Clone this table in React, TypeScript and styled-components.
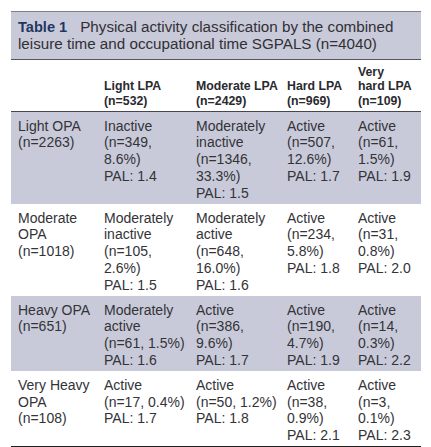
import React from "react";
import styled, { createGlobalStyle } from "styled-components";

const Global = createGlobalStyle`
  html, body { margin: 0; padding: 0; background: #ffffff; }
  body { font-family: "Liberation Sans", Arial, Helvetica, sans-serif; }
`;

const Page = styled.div`
  padding: 11px 10px 0 11px;
  width: 410px;
`;

const Caption = styled.div`
  background: #c9cad9;
  border-top: 1px solid #7d7e8a;
  border-bottom: 1px solid #55565f;
  padding: 7px 7px 6px 7px;
  font-size: 15.2px;
  line-height: 16.8px;
  color: #303035;
`;

const CaptionLine = styled.div`
  display: flex;
  white-space: nowrap;
`;

const Label = styled.span`
  font-weight: bold;
  font-size: 14.6px;
  color: #1e3863;
  margin-right: 13px;
`;

const Table = styled.table`
  width: 410px;
  border-collapse: collapse;
  table-layout: fixed;
  border-bottom: 1.5px solid #1e1e1e;
`;

const HeadCell = styled.th`
  text-align: left;
  vertical-align: bottom;
  font-weight: bold;
  font-size: 12.3px;
  line-height: 14.7px;
  color: #2a2a2f;
  padding: 5px 0 2px 7px;
  border-bottom: 1px solid #45464e;
`;

const Row = styled.tr<{ $shaded: boolean }>`
  background: ${(p) => (p.$shaded ? "#c9cad9" : "#ffffff")};
`;

const Cell = styled.td`
  vertical-align: top;
  font-size: 14px;
  line-height: 16.7px;
  color: #333338;
  padding: 6px 0 2.5px 7px;
`;

const Line = styled.div`
  white-space: nowrap;
`;

const headers: string[][] = [
  [],
  ["Light LPA", "(n=532)"],
  ["Moderate LPA", "(n=2429)"],
  ["Hard LPA", "(n=969)"],
  ["Very", "hard LPA", "(n=109)"],
];

const rows: string[][][] = [
  [
    ["Light OPA", "(n=2263)"],
    ["Inactive", "(n=349,", "8.6%)", "PAL: 1.4"],
    ["Moderately", "inactive", "(n=1346,", "33.3%)", "PAL: 1.5"],
    ["Active", "(n=507,", "12.6%)", "PAL: 1.7"],
    ["Active", "(n=61,", "1.5%)", "PAL: 1.9"],
  ],
  [
    ["Moderate", "OPA", "(n=1018)"],
    ["Moderately", "inactive", "(n=105,", "2.6%)", "PAL: 1.5"],
    ["Moderately", "active", "(n=648,", "16.0%)", "PAL: 1.6"],
    ["Active", "(n=234,", "5.8%)", "PAL: 1.8"],
    ["Active", "(n=31,", "0.8%)", "PAL: 2.0"],
  ],
  [
    ["Heavy OPA", "(n=651)"],
    ["Moderately", "active", "(n=61, 1.5%)", "PAL: 1.6"],
    ["Active", "(n=386,", "9.6%)", "PAL: 1.7"],
    ["Active", "(n=190,", "4.7%)", "PAL: 1.9"],
    ["Active", "(n=14,", "0.3%)", "PAL: 2.2"],
  ],
  [
    ["Very Heavy", "OPA", "(n=108)"],
    ["Active", "(n=17, 0.4%)", "PAL: 1.7"],
    ["Active", "(n=50, 1.2%)", "PAL: 1.8"],
    ["Active", "(n=38,", "0.9%)", "PAL: 2.1"],
    ["Active", "(n=3,", "0.1%)", "PAL: 2.3"],
  ],
];

const widths = [86, 92, 91, 71, 70];

export default function App() {
  return (
    <>
      <Global />
      <Page>
        <Caption>
          <CaptionLine>
            <Label>Table 1</Label>
            <span>Physical activity classification by the combined</span>
          </CaptionLine>
          <CaptionLine>leisure time and occupational time SGPALS (n=4040)</CaptionLine>
        </Caption>
        <Table>
          <colgroup>
            {widths.map((w, i) => (
              <col key={i} style={{ width: w }} />
            ))}
          </colgroup>
          <thead>
            <tr>
              {headers.map((h, i) => (
                <HeadCell key={i}>
                  {h.map((l, j) => (
                    <Line key={j}>{l}</Line>
                  ))}
                </HeadCell>
              ))}
            </tr>
          </thead>
          <tbody>
            {rows.map((r, i) => (
              <Row key={i} $shaded={i % 2 === 0}>
                {r.map((c, j) => (
                  <Cell key={j}>
                    {c.map((l, k) => (
                      <Line key={k}>{l}</Line>
                    ))}
                  </Cell>
                ))}
              </Row>
            ))}
          </tbody>
        </Table>
      </Page>
    </>
  );
}
